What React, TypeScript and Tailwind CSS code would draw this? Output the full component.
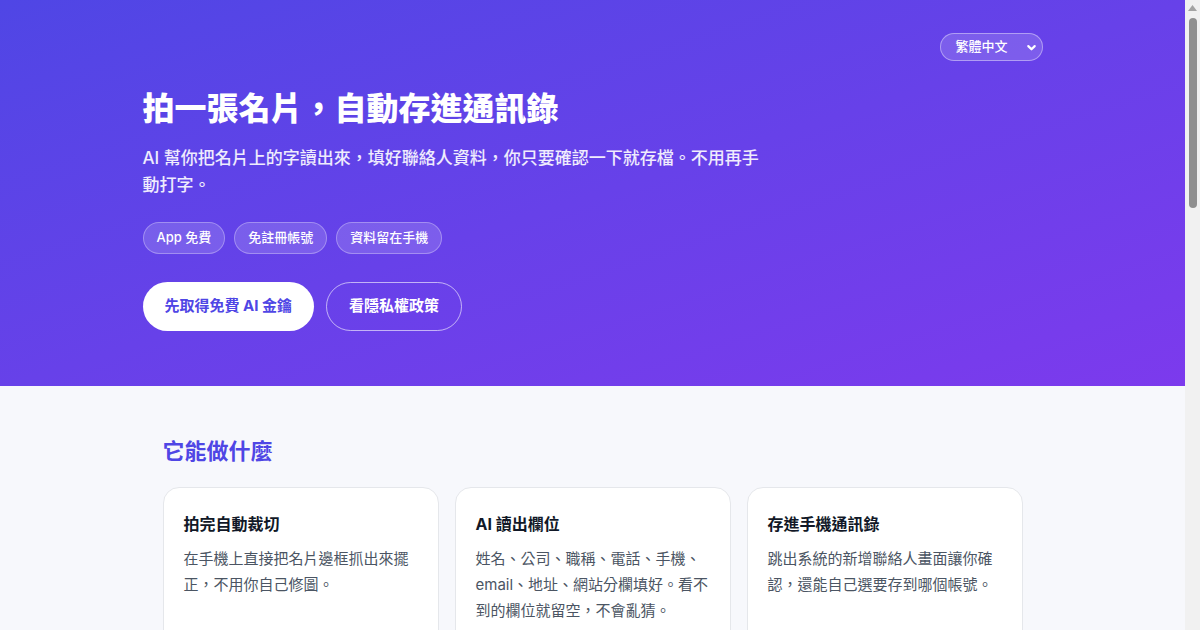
import React from 'react';

const features = [
  { title: '拍完自動裁切', body: '在手機上直接把名片邊框抓出來擺正，不用你自己修圖。' },
  { title: 'AI 讀出欄位', body: '姓名、公司、職稱、電話、手機、email、地址、網站分欄填好。看不到的欄位就留空，不會亂猜。' },
  { title: '存進手機通訊錄', body: '跳出系統的新增聯絡人畫面讓你確認，還能自己選要存到哪個帳號。' },
];

const steps = [
  { title: '1. 取得金鑰', body: '到 Google AI Studio 申請免費的 Gemini API 金鑰，貼進 App 設定裡。' },
  { title: '2. 拍名片', body: '對準名片拍一張，App 會自動找出四個角並裁切。' },
  { title: '3. 確認存檔', body: '檢查 AI 讀出來的欄位，有錯就改，按存檔就完成。' },
];

const faqs = [
  ['金鑰要錢嗎？', 'Gemini API 有免費額度，一般個人使用綽綽有餘。'],
  ['支援哪些語言的名片？', '中文、英文、日文等常見語言都可以辨識。'],
  ['可以一次掃很多張嗎？', '目前一次處理一張，存完就能馬上拍下一張。'],
];

const Card: React.FC<{ title: string; body: string; className?: string }> = ({ title, body, className = '' }) => (
  <div className={`bg-white border border-[#e5e7eb] rounded-2xl px-5 pt-[24px] pb-6 ${className}`}>
    <h3 className="text-[16px] leading-[24px] font-bold text-[#111827]">{title}</h3>
    <p className="mt-[10px] text-[15px] leading-[26px] text-[#4b5563]">{body}</p>
  </div>
);

const App: React.FC = () => {
  return (
    <div className="flex bg-[#f7f8fc] font-['Inter','Noto_Sans_CJK_TC',sans-serif] text-[#1f2937]">
      <main className="flex-1 min-w-0">
        {/* Hero */}
        <header className="bg-gradient-to-br from-[#4f46e5] to-[#7c3aed] text-white">
          <div className="max-w-[900px] mx-auto pt-[33px] pb-[55px]">
            <div className="flex justify-end">
              <div className="flex items-center gap-[18px] h-[28px] pl-[14px] pr-[5px] rounded-full bg-white/15 border border-white/40 text-[13px] font-medium">
                <span>繁體中文</span>
                <svg className="w-[11px] h-[11px]" viewBox="0 0 12 12" fill="none" stroke="currentColor" strokeWidth={2.4} strokeLinecap="round" strokeLinejoin="round">
                  <path d="M2.5 4.5 6 8l3.5-3.5" />
                </svg>
              </div>
            </div>

            <h1 className="mt-[26px] text-[32px] leading-[44px] font-extrabold">拍一張名片，自動存進通訊錄</h1>
            <p className="mt-[14px] max-w-[620px] text-[17px] leading-[27px] font-medium text-white/90">
              AI 幫你把名片上的字讀出來，填好聯絡人資料，你只要確認一下就存檔。不用再手動打字。
            </p>

            <div className="mt-[23px] flex gap-[9px]">
              {['App 免費', '免註冊帳號', '資料留在手機'].map((c) => (
                <span key={c} className="h-[32px] px-[13px] flex items-center rounded-full bg-white/15 border border-white/30 text-[13px] font-medium">
                  {c}
                </span>
              ))}
            </div>

            <div className="mt-[28px] flex gap-3">
              <button className="h-[49px] px-[22px] rounded-full bg-white text-[#4f46e5] text-[15px] font-bold">先取得免費 AI 金鑰</button>
              <button className="h-[49px] px-[22px] rounded-full border border-white/60 text-white text-[15px] font-bold">看隱私權政策</button>
            </div>
          </div>
        </header>

        {/* Features */}
        <section className="max-w-[900px] mx-auto px-5 pt-[50px] pb-12">
          <h2 className="text-[22px] leading-[30px] font-bold text-[#4f46e5]">它能做什麼</h2>
          <div className="mt-[21px] grid grid-cols-3 gap-4">
            {features.map((f) => (
              <Card key={f.title} title={f.title} body={f.body} className="min-h-[170px]" />
            ))}
          </div>
        </section>

        {/* How to */}
        <section className="max-w-[900px] mx-auto px-5 pb-12">
          <h2 className="text-[22px] leading-[30px] font-bold text-[#4f46e5]">怎麼用</h2>
          <div className="mt-[22px] flex flex-col gap-4">
            {steps.map((s) => (
              <Card key={s.title} title={s.title} body={s.body} />
            ))}
          </div>
        </section>

        {/* Privacy */}
        <section className="max-w-[900px] mx-auto px-5 pb-12">
          <h2 className="text-[22px] leading-[30px] font-bold text-[#4f46e5]">你的資料去哪裡</h2>
          <div className="mt-[22px] bg-white border border-[#e5e7eb] rounded-2xl px-5 py-6 text-[15px] leading-[26px] text-[#4b5563]">
            <p>名片照片只會送到你自己金鑰對應的 Gemini API 做辨識，我們沒有伺服器，也不會收集任何資料。</p>
            <p className="mt-3">聯絡人直接存進手機的系統通訊錄，App 本身不另外保存。</p>
          </div>
        </section>

        {/* FAQ */}
        <section className="max-w-[900px] mx-auto px-5 pb-16">
          <h2 className="text-[22px] leading-[30px] font-bold text-[#4f46e5]">常見問題</h2>
          <div className="mt-[22px] flex flex-col gap-4">
            {faqs.map(([q, a]) => (
              <Card key={q} title={q} body={a} />
            ))}
          </div>
        </section>

        <footer className="border-t border-[#e5e7eb] py-8 text-center text-[13px] text-[#6b7280]">
          © 名片掃描 · 隱私權政策
        </footer>
      </main>

      {/* scrollbar gutter */}
      <aside className="w-[15px] shrink-0">
        <div className="sticky top-0 h-screen bg-[#f1f1f1] flex flex-col items-center">
          <svg className="mt-[5px] w-[9px] h-[6px]" viewBox="0 0 9 6">
            <path d="M4.5 0 9 6H0z" fill="#a3a3a3" />
          </svg>
          <div className="mt-[7px] w-[8px] h-[190px] rounded-full bg-[#8f8f8f]" />
        </div>
      </aside>
    </div>
  );
};

export default App;
